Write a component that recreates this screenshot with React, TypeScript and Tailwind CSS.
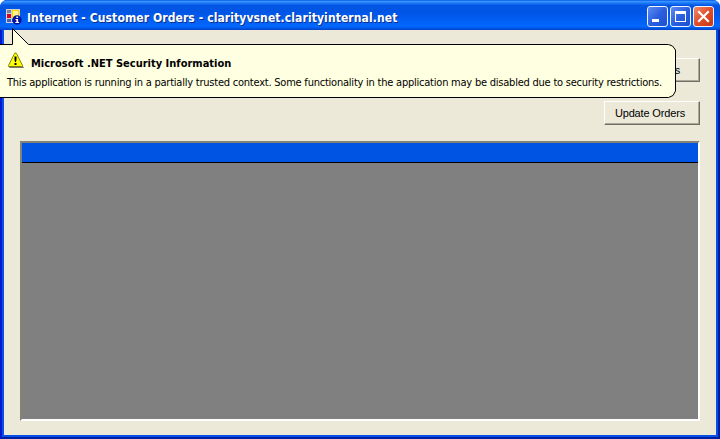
import React from 'react';

function AppIcon() {
  return (
    <svg width="16" height="16" viewBox="0 0 16 16" className="shrink-0" shapeRendering="crispEdges">
      <path d="M0 0h14v14H0z" fill="#d6d0c8" />
      <path d="M1 1h4v3H1zM6 1h1v3H6z" fill="#7682a0" />
      <path d="M1 5h4v4H1z" fill="#d4002c" />
      <path d="M1 10h4v3H1zM6 10h3v3H6z" fill="#3c62c8" />
      <path d="M6 1h7v8H6z" fill="#f2d800" />
      <path d="M7 2h5v5H7z" fill="#fff690" />
      <g shapeRendering="auto">
        <circle cx="11" cy="11" r="4.700" fill="#0010a0" />
        <path d="M10.300 7.500h1.800v1.500h-1.800zM9.500 10h2.600v3h1v1H9.300v-1h1.100v-2h-.9z" fill="#fff" />
      </g>
    </svg>
  );
}

function CaptionButton({ kind }: { kind: 'min' | 'max' | 'close' }) {
  const color =
    kind === 'close'
      ? 'bg-linear-to-br from-[#ee8a6b] via-[#df4d28] to-[#c53a18]'
      : 'bg-linear-to-br from-[#5f8cf0] via-[#2c5fdf] to-[#1b50d3]';
  return (
    <div className={`h-[21px] w-[21px] rounded-[3px] border border-[#f0f4ff] ${color}`}>
      <svg width="19" height="19" viewBox="0 0 19 19">
        {kind === 'min' && <path d="M4 12h7v3H4z" fill="#fff" />}
        {kind === 'max' && <path d="M4 4h11v11H4zM5 7v7h9V7z" fill="#fff" fillRule="evenodd" />}
        {kind === 'close' && <path d="M5 5l9 9M14 5l-9 9" stroke="#fff" strokeWidth="2.2" strokeLinecap="square" />}
      </svg>
    </div>
  );
}

function PushButton({ label, textClass }: { label: string; textClass: string }) {
  return (
    <button className="flex h-6 w-24 items-center justify-center border border-t-white border-r-[#716f64] border-b-[#716f64] border-l-white bg-[#ece9d8] font-['Liberation_Sans',Arial,sans-serif] text-[11px] leading-none text-black shadow-[inset_-1px_-1px_0_#aca899]">
      <span className={`whitespace-nowrap ${textClass}`}>{label}</span>
    </button>
  );
}

function SecurityBalloon() {
  return (
    <div className="absolute top-[28px] left-0 h-[70px] w-[677px]">
      <svg width="677" height="70" viewBox="0 0 677 70" className="absolute inset-0">
        <path
          d="M-5 16.500H12.500V.5L28.500 16.500H668.500L672.500 18L675.500 22V63L673 67.500L668.500 69.500H-5Z"
          fill="#ffffe1"
          stroke="#000"
        />
      </svg>
      <div className="relative flex flex-col pt-[24px] pl-[7px]">
        <div className="flex h-[22px] items-start">
          <svg width="17" height="17" viewBox="0 0 17 17" className="shrink-0">
            <path d="M9 2.500L17 16H2z" fill="#77776c" />
            <path d="M8 1H9L10 2.500L15.500 13.500V14.500H1.500V13.500L7 2.500z" fill="#ffff00" stroke="#77770a" strokeWidth=".9" />
            <path d="M7.500 4.500h2v3l-.5 2.500h-1l-.5-2.500zM7.500 11h2v2h-2z" fill="#000" />
          </svg>
          <b className="mt-[5px] ml-[7px] text-[11px] leading-[14px] whitespace-nowrap">Microsoft .NET Security Information</b>
        </div>
        <p className="mt-[2px] text-[11px] leading-[14px] tracking-[-0.225px] whitespace-nowrap">
          This application is running in a partially trusted context. Some functionality in the application may be disabled due to security restrictions.
        </p>
      </div>
    </div>
  );
}

export default function App() {
  return (
    <div className="relative flex h-[439px] w-[720px] flex-col overflow-hidden bg-white font-['DejaVu_Sans_Condensed','DejaVu_Sans',sans-serif] text-black">
      <div className="flex h-full flex-col rounded-t-[7px] bg-[#0831d9]">
        <header className="flex h-[30px] shrink-0 items-center rounded-t-[7px] bg-[linear-gradient(180deg,#0058e6_0%,#3a93ff_5%,#2080fa_9%,#0356e3_18%,#0055e5_40%,#0262f8_75%,#0368ff_88%,#0054e0_95%,#0040c8_100%)] pt-[3px] pr-[6px] pl-[6px]">
          <AppIcon />
          <h1 className="ml-[5px] flex-1 pt-[2px] text-[12px] leading-[16px] font-bold tracking-[0.1px] whitespace-nowrap text-white [text-shadow:1px_1px_0_#0b2f8a]">
            Internet - Customer Orders - clarityvsnet.clarityinternal.net
          </h1>
          <div className="flex gap-[2px]">
            <CaptionButton kind="min" />
            <CaptionButton kind="max" />
            <CaptionButton kind="close" />
          </div>
        </header>
        <div className="flex flex-1 border-t-0 border-r-2 border-b-2 border-l-2 border-[#001ea0] border-l-[#0019d0]">
          <main className="flex flex-1 flex-col border-r-2 border-b-2 border-l-2 border-[#0a4ee8] bg-[#ece9d8] px-4 pt-[28px] pb-[14px]">
            <div className="flex flex-col items-end gap-[19px]">
              <PushButton label="Get Orders" textClass="ml-[2px]" />
              <PushButton label="Update Orders" textClass="mr-[4px] tracking-[-0.15px]" />
            </div>
            <section className="mt-4 flex h-[280px] flex-col border-2 border-t-[#848274] border-r-white border-b-white border-l-[#848274] bg-[#808080]">
              <div className="h-5 border-b border-black bg-[#0054e3]" />
            </section>
          </main>
        </div>
      </div>
      <SecurityBalloon />
    </div>
  );
}
